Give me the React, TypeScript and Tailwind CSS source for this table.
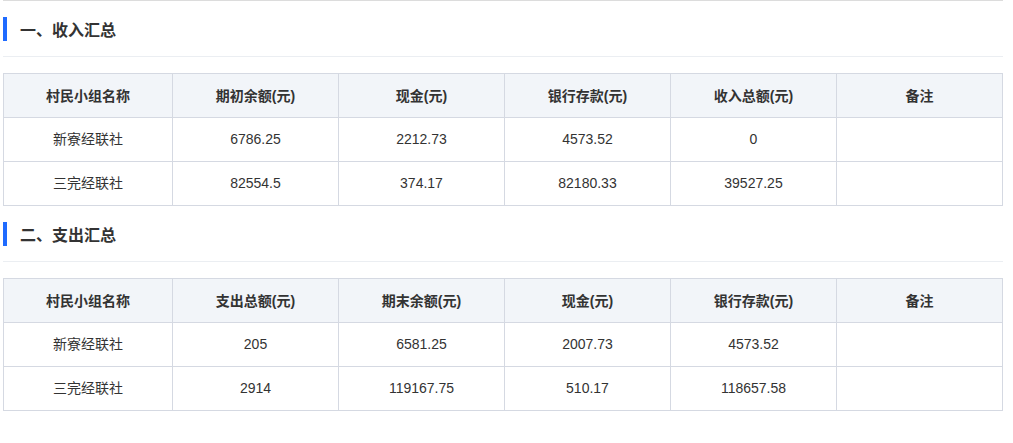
const income = {
  title: "一、收入汇总",
  headers: ["村民小组名称", "期初余额(元)", "现金(元)", "银行存款(元)", "收入总额(元)", "备注"],
  rows: [
    ["新寮经联社", "6786.25", "2212.73", "4573.52", "0", ""],
    ["三完经联社", "82554.5", "374.17", "82180.33", "39527.25", ""],
  ],
}

const expense = {
  title: "二、支出汇总",
  headers: ["村民小组名称", "支出总额(元)", "期末余额(元)", "现金(元)", "银行存款(元)", "备注"],
  rows: [
    ["新寮经联社", "205", "6581.25", "2007.73", "4573.52", ""],
    ["三完经联社", "2914", "119167.75", "510.17", "118657.58", ""],
  ],
}

function Section({ data }: { data: typeof income }) {
  return (
    <div className="pt-4">
      <div className="flex items-center h-6 mb-[15px]">
        <span className="w-1 h-6 bg-[#1f6bff]" />
        <h2 className="ml-[13px] mt-[3px] text-base font-bold text-[#333]">{data.title}</h2>
      </div>
      <div className="border-t border-[#ebeef2]" />
      <table className="mt-4 w-full table-fixed border-collapse text-sm text-[#333]">
        <colgroup>
          <col className="w-[169px]" />
          <col />
          <col />
          <col />
          <col />
          <col />
        </colgroup>
        <thead>
          <tr className="bg-[#f2f5f9] h-11">
            {data.headers.map((h) => (
              <th key={h} className="border border-[#d5d9e2] font-bold text-center">
                {h}
              </th>
            ))}
          </tr>
        </thead>
        <tbody>
          {data.rows.map((row, i) => (
            <tr key={i} className="h-11">
              {row.map((c, j) => (
                <td key={j} className="border border-[#d5d9e2] text-center pb-[2px]">
                  {c}
                </td>
              ))}
            </tr>
          ))}
        </tbody>
      </table>
    </div>
  )
}

export default function App() {
  return (
    <div
      className="bg-white w-[1013px] h-[443px] px-[3px]"
      style={{ fontFamily: '"Liberation Sans", "Noto Sans CJK SC", sans-serif' }}
    >
      <div className="w-[1000px] border-t border-[#dcdcdc]">
        <Section data={income} />
        <Section data={expense} />
      </div>
    </div>
  )
}
